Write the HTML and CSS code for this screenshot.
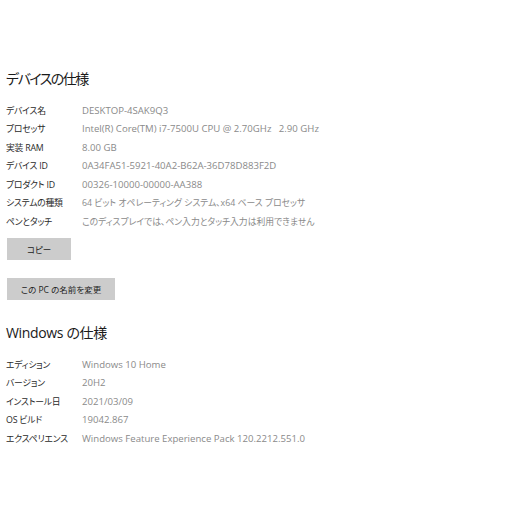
FILE: index.html
```html
<!DOCTYPE html>
<html lang="ja">
<head>
<meta charset="utf-8">
<link rel="stylesheet" href="styles.css">
</head>
<body>
<main class="page">
  <section class="section device">
    <h2 class="heading heading-jp">デバイスの仕様</h2>
    <dl class="specs">
      <dt>デバイス名</dt><dd>DESKTOP-4SAK9Q3</dd>
      <dt>プロセッサ</dt><dd>Intel(R) Core(TM) i7-7500U CPU @ 2.70GHz&nbsp;&nbsp;&nbsp;2.90 GHz</dd>
      <dt>実装 RAM</dt><dd>8.00 GB</dd>
      <dt>デバイス ID</dt><dd>0A34FA51-5921-40A2-B62A-36D78D883F2D</dd>
      <dt>プロダクト ID</dt><dd>00326-10000-00000-AA388</dd>
      <dt>システムの種類</dt><dd class="jp">64 ビット オペレーティング システム、x64 ベース プロセッサ</dd>
      <dt>ペンとタッチ</dt><dd class="jp">このディスプレイでは、ペン入力とタッチ入力は利用できません</dd>
    </dl>
    <button class="btn btn-copy">コピー</button>
    <button class="btn btn-rename">この PC の名前を変更</button>
  </section>
  <section class="section windows">
    <h2 class="heading heading-en">Windows の仕様</h2>
    <dl class="specs">
      <dt>エディション</dt><dd>Windows 10 Home</dd>
      <dt>バージョン</dt><dd>20H2</dd>
      <dt>インストール日</dt><dd>2021/03/09</dd>
      <dt>OS ビルド</dt><dd>19042.867</dd>
      <dt>エクスペリエンス</dt><dd>Windows Feature Experience Pack 120.2212.551.0</dd>
    </dl>
  </section>
</main>
</body>
</html>
```
FILE: styles.css
```css
html, body {
  margin: 0;
  padding: 0;
  background: #ffffff;
}
body {
  font-family: "Open Sans", "Noto Sans CJK JP", sans-serif;
  font-feature-settings: "palt";
  color: #222;
}
.page {
  padding: 69px 0 0 6px;
  display: flex;
  flex-direction: column;
}
.section {
  display: flex;
  flex-direction: column;
  align-items: flex-start;
}
.windows {
  margin-top: 23px;
}
.heading {
  margin: 0 0 12px 0;
  font-size: 14px;
  line-height: 20px;
  font-weight: 400;
  color: #1a1a1a;
}
.heading-jp {
  letter-spacing: -1.5px;
}
.heading-en {
  letter-spacing: -0.35px;
}
.specs {
  margin: 0;
  display: grid;
  grid-template-columns: 76px auto;
  grid-auto-rows: 18.5px;
  align-items: center;
  font-size: 8.8px;
}
.specs dt {
  color: #2a2a2a;
  white-space: nowrap;
  letter-spacing: -0.2px;
}
.specs dd {
  margin: 0;
  color: #8a8a8a;
  white-space: nowrap;
  font-size: 9.6px;
}
.specs dd.jp {
  font-size: 8.8px;
}
.btn {
  font-family: inherit;
  font-feature-settings: "palt";
  font-size: 8.5px;
  color: #222;
  background: #cccccc;
  border: none;
  padding: 0;
  height: 22px;
}
.btn-copy {
  margin-top: 7.5px;
  margin-left: 1px;
  width: 64px;
}
.btn-rename {
  margin-top: 18px;
  margin-left: 1px;
  width: 108px;
}
```
